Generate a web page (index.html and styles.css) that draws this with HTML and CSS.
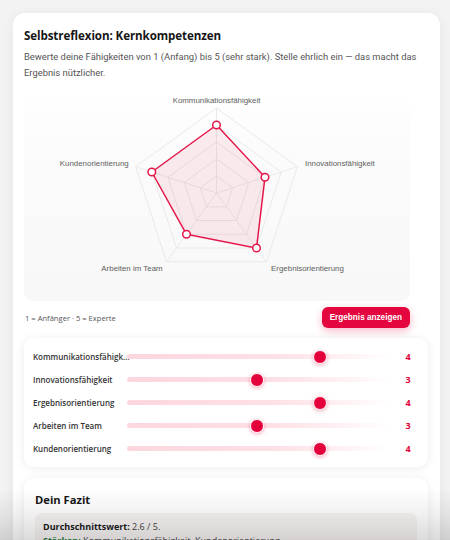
FILE: index.html
```html
<!DOCTYPE html>
<html lang="de">
<head>
<meta charset="utf-8">
<title>Selbstreflexion</title>
<link rel="stylesheet" href="styles.css">
</head>
<body>
<main class="card">
  <h1 class="title">Selbstreflexion: Kernkompetenzen</h1>
  <p class="intro">Bewerte deine Fähigkeiten von 1 (Anfang) bis 5 (sehr stark). Stelle ehrlich ein — das macht das Ergebnis nützlicher.</p>

  <section class="top">
    <div class="chart">
      <svg width="385" height="211" viewBox="0 0 385 211">
        <g fill="none" stroke="#e9e9e9" stroke-width="1">
          <polygon points="192.5,18 273.3,76.7 242.5,171.8 142.5,171.8 111.7,76.7"/>
          <polygon points="192.5,35 257.2,82 232.5,158 152.5,158 127.8,82"/>
          <polygon points="192.5,52 241,87.2 222.5,144.3 162.5,144.3 144,87.2"/>
          <polygon points="192.5,69 224.8,92.5 212.5,130.5 172.5,130.5 160.2,92.5"/>
          <polygon points="192.5,86 208.7,97.7 202.5,116.8 182.5,116.8 176.3,97.7"/>
          <line x1="192.5" y1="103" x2="192.5" y2="18"/>
          <line x1="192.5" y1="103" x2="273.3" y2="76.7"/>
          <line x1="192.5" y1="103" x2="242.5" y2="171.8"/>
          <line x1="192.5" y1="103" x2="142.5" y2="171.8"/>
          <line x1="192.5" y1="103" x2="111.7" y2="76.7"/>
        </g>
        <polygon points="192.5,35 241,87.2 232.5,158 162.5,144.3 127.8,82" fill="rgba(228,0,58,0.07)" stroke="#e5174a" stroke-width="1.5" stroke-linejoin="round"/>
        <g fill="#fff" stroke="#e5174a" stroke-width="1.5">
          <circle cx="192.5" cy="35" r="3.8"/>
          <circle cx="241" cy="87.2" r="3.8"/>
          <circle cx="232.5" cy="158" r="3.8"/>
          <circle cx="162.5" cy="144.3" r="3.8"/>
          <circle cx="127.8" cy="82" r="3.8"/>
        </g>
        <g class="axis-label">
          <text x="192.5" y="12.5" text-anchor="middle">Kommunikationsfähigkeit</text>
          <text x="281" y="75.5">Innovationsfähigkeit</text>
          <text x="104.7" y="75.5" text-anchor="end">Kundenorientierung</text>
          <text x="108" y="180.5" text-anchor="middle">Arbeiten im Team</text>
          <text x="283.5" y="180.5" text-anchor="middle">Ergebnisorientierung</text>
        </g>
      </svg>
    </div>
    <div class="actions">
      <span class="scale">1 = Anfänger · 5 = Experte</span>
      <button class="btn" type="button">Ergebnis anzeigen</button>
    </div>
  </section>

  <section class="sliders">
    <div class="row">
      <span class="label">Kommunikationsfähigkeit</span>
      <div class="track"><div class="rail"><span class="thumb" style="left:75%"></span></div></div>
      <span class="value">4</span>
    </div>
    <div class="row">
      <span class="label">Innovationsfähigkeit</span>
      <div class="track"><div class="rail"><span class="thumb" style="left:50%"></span></div></div>
      <span class="value">3</span>
    </div>
    <div class="row">
      <span class="label">Ergebnisorientierung</span>
      <div class="track"><div class="rail"><span class="thumb" style="left:75%"></span></div></div>
      <span class="value">4</span>
    </div>
    <div class="row">
      <span class="label">Arbeiten im Team</span>
      <div class="track"><div class="rail"><span class="thumb" style="left:50%"></span></div></div>
      <span class="value">3</span>
    </div>
    <div class="row">
      <span class="label">Kundenorientierung</span>
      <div class="track"><div class="rail"><span class="thumb" style="left:75%"></span></div></div>
      <span class="value">4</span>
    </div>
  </section>

  <section class="fazit">
    <h2 class="fazit-title">Dein Fazit</h2>
    <div class="fazit-box">
      <p class="fazit-line"><strong>Durchschnittswert:</strong> 2.6 / 5.</p>
      <p class="fazit-line"><strong class="good">Stärken:</strong> Kommunikationsfähigkeit, Kundenorientierung</p>
      <p class="fazit-line"><strong class="bad">Entwicklungsfelder:</strong> Innovationsfähigkeit, Arbeiten im Team</p>
    </div>
  </section>
</main>
<div class="fade"></div>
</body>
</html>
```

FILE: styles.css
```css
* { box-sizing: border-box; }

html, body {
  margin: 0;
  padding: 0;
  height: 100%;
  overflow: hidden;
}

body {
  background: #f3f3f4;
  font-family: "Open Sans", "Noto Sans", Arial, sans-serif;
  color: #1c1c1c;
  padding: 13px 10px 0 13px;
}

.card {
  width: 427px;
  background: #fff;
  border-radius: 12px;
  box-shadow: 0 2px 14px rgba(0, 0, 0, 0.06);
  padding: 14px 12px 20px 11px;
}

.title {
  margin: 0;
  font-size: 11.6px;
  line-height: 18px;
  font-weight: 700;
  letter-spacing: -0.1px;
  color: #161616;
}

.intro {
  margin: 4px 0 0;
  font-family: Roboto, "Open Sans", Arial, sans-serif;
  font-size: 9.4px;
  line-height: 16px;
  color: #555;
}

.top {
  width: 386px;
  margin-top: 11px;
}

.chart {
  height: 209px;
  border-radius: 9px;
  background: linear-gradient(180deg, #ffffff 0%, #fbfbfb 30%, #f8f8f8 100%);
  overflow: hidden;
}

.chart svg { display: block; margin-top: -2px; }

.axis-label text {
  font-family: "Liberation Sans", Arial, sans-serif;
  font-size: 7.9px;
  fill: #606060;
}

.actions {
  display: flex;
  align-items: center;
  justify-content: space-between;
  margin-top: 6px;
}

.scale {
  font-size: 7.6px;
  color: #555;
  padding-left: 1px;
}

.btn {
  border: 0;
  background: #e4063e;
  color: #fff;
  font-family: "Liberation Sans", Arial, sans-serif;
  font-weight: 700;
  font-size: 8.2px;
  height: 21px;
  padding: 0 8px;
  border-radius: 6px;
  box-shadow: 0 3px 8px rgba(228, 6, 62, 0.28);
}

.sliders {
  margin-top: 10px;
  background: #fff;
  border-radius: 10px;
  box-shadow: 0 1px 10px rgba(0, 0, 0, 0.08);
  padding: 7px 0 7px 9px;
}

.row {
  display: grid;
  grid-template-columns: 94px 263px 36px;
  align-items: center;
  height: 23px;
}

.label {
  width: 98px;
  font-size: 8px;
  font-weight: 600;
  color: #333;
  white-space: nowrap;
  overflow: hidden;
  text-overflow: ellipsis;
}

.track {
  position: relative;
  height: 5px;
  border-radius: 3px;
  background: linear-gradient(90deg, #fdd6de 0%, #fde0e6 55%, #fff3f5 85%, rgba(255, 255, 255, 0) 100%);
}

.rail {
  position: absolute;
  left: 4px;
  right: 7px;
  top: 0;
  bottom: 0;
}

.thumb {
  position: absolute;
  top: 50%;
  width: 14px;
  height: 14px;
  border-radius: 50%;
  background: #e4003a;
  border: 1.5px solid #fff;
  box-shadow: 0 1px 4px rgba(228, 0, 58, 0.35);
  transform: translate(-50%, -50%);
}

.value {
  text-align: center;
  font-size: 9px;
  font-weight: 700;
  color: #e4003a;
}

.fazit {
  margin-top: 11px;
  background: #fff;
  border-radius: 10px;
  box-shadow: 0 1px 10px rgba(0, 0, 0, 0.08);
  padding: 13px 11px 12px 11px;
}

.fazit-title {
  margin: 0;
  font-size: 11.2px;
  line-height: 18px;
  font-weight: 700;
  color: #161616;
}

.fazit-box {
  margin-top: 4px;
  background: #f8f4f4;
  border-radius: 7px;
  padding: 7px 8px;
}

.fazit-line {
  margin: 0;
  font-size: 9px;
  line-height: 14px;
  color: #444;
}

.fazit-line strong { color: #1a1a1a; }
.fazit-line .good { color: #1e7a3c; }
.fazit-line .bad { color: #b0203a; }

.fade {
  position: fixed;
  left: 0;
  right: 0;
  bottom: 0;
  height: 52px;
  background: linear-gradient(180deg, rgba(0, 0, 0, 0) 0%, rgba(0, 0, 0, 0.05) 45%, rgba(0, 0, 0, 0.14) 100%);
  pointer-events: none;
}
```
